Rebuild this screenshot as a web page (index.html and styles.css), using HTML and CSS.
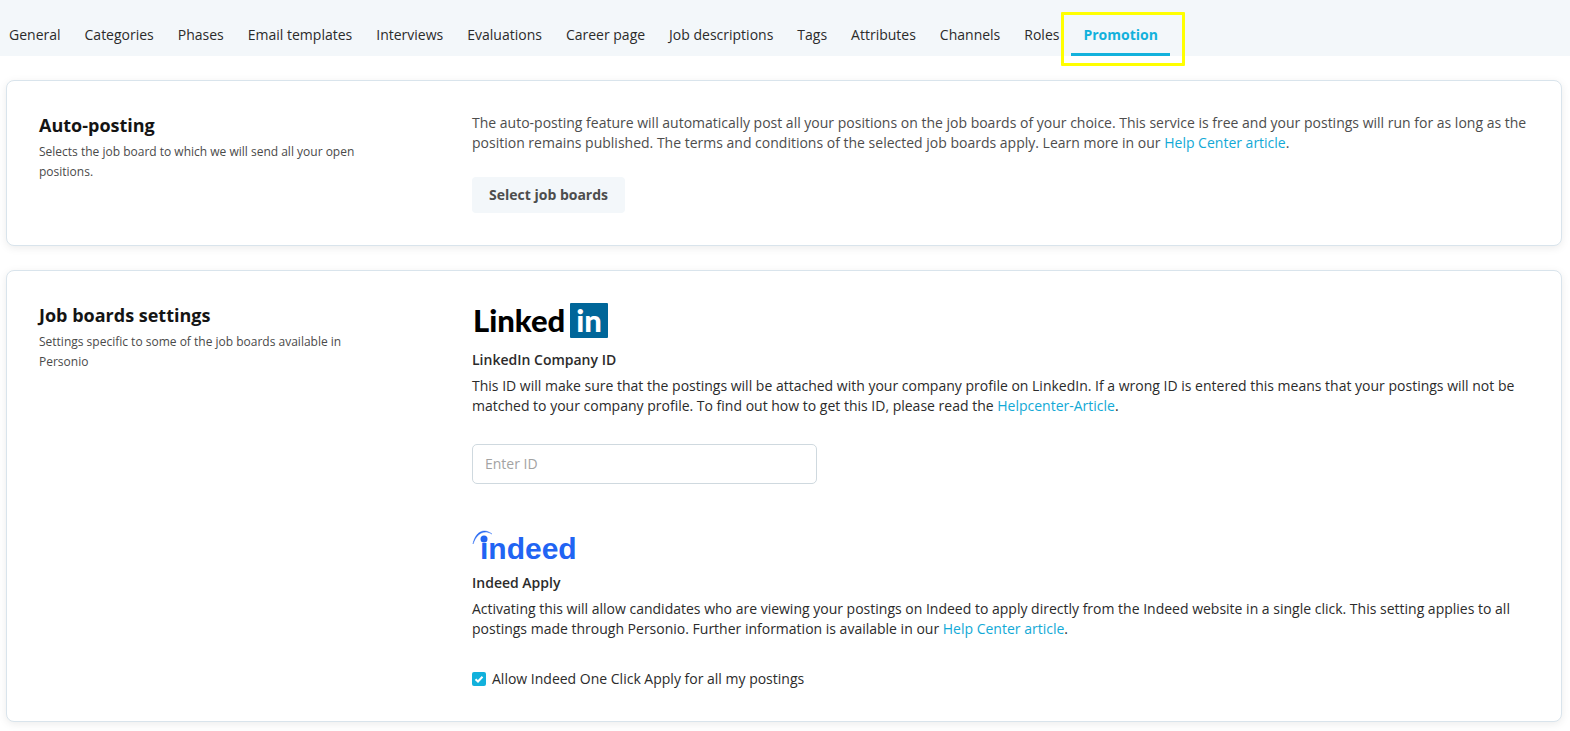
FILE: index.html
```
<!DOCTYPE html>
<html lang="en">
<head>
<meta charset="utf-8">
<title>Promotion</title>
<link rel="stylesheet" href="styles.css">
</head>
<body>
<nav class="tabs" aria-label="Recruiting settings">
  <a class="tab" href="#general">General</a>
  <a class="tab" href="#categories">Categories</a>
  <a class="tab" href="#phases">Phases</a>
  <a class="tab" href="#email">Email templates</a>
  <a class="tab" href="#interviews">Interviews</a>
  <a class="tab" href="#evaluations">Evaluations</a>
  <a class="tab" href="#career">Career page</a>
  <a class="tab" href="#jobs">Job descriptions</a>
  <a class="tab" href="#tags">Tags</a>
  <a class="tab" href="#attributes">Attributes</a>
  <a class="tab" href="#channels">Channels</a>
  <a class="tab" href="#roles">Roles</a>
  <a class="tab tab-active" href="#promotion" aria-current="page">Promotion<span class="highlight"></span></a>
</nav>
<main class="cards">
  <section class="card">
    <header class="card-intro">
      <h2 class="card-title">Auto-posting</h2>
      <p class="card-hint">Selects the job board to which we will send all your open positions.</p>
    </header>
    <div class="card-body">
      <p class="text text-muted">The auto-posting feature will automatically post all your positions on the job boards of your choice. This service is free and your postings will run for as long as the position remains published. The terms and conditions of the selected job boards apply. Learn more in our <a class="link" href="#help">Help Center article</a>.</p>
      <button class="button" type="button">Select job boards</button>
    </div>
  </section>
  <section class="card">
    <header class="card-intro">
      <h2 class="card-title">Job boards settings</h2>
      <p class="card-hint">Settings specific to some of the job boards available in Personio</p>
    </header>
    <div class="card-body">
      <div class="board">
        <svg class="logo" width="136" height="36" viewBox="0 0 136 36" role="img" aria-label="LinkedIn">
          <text class="linked" x="1" y="29">Linked</text>
          <rect x="98" y="0" width="38" height="35" rx="1" fill="#006699"/>
          <text class="linked linked-in" x="117" y="29" text-anchor="middle">in</text>
        </svg>
        <label class="board-title" for="company-id">LinkedIn Company ID</label>
        <p class="text">This ID will make sure that the postings will be attached with your company profile on LinkedIn. If a wrong ID is entered this means that your postings will not be matched to your company profile. To find out how to get this ID, please read the <a class="link" href="#linkedin-help">Helpcenter-Article</a>.</p>
        <input class="field" id="company-id" type="text" placeholder="Enter ID">
      </div>
      <div class="board">
        <svg class="logo" width="106" height="31" viewBox="0 0 106 31" role="img" aria-label="Indeed">
          <text class="indeed" x="8" y="28">ındeed</text>
          <circle cx="12" cy="8" r="3.5" fill="#2164f3"/>
          <path d="M1 13C3 2 11-4 20 3C12-1.500 5 2 1 13Z" fill="#2164f3" stroke="#2164f3" stroke-width=".4"/>
        </svg>
        <h3 class="board-title">Indeed Apply</h3>
        <p class="text">Activating this will allow candidates who are viewing your postings on Indeed to apply directly from the Indeed website in a single click. This setting applies to all postings made through Personio. Further information is available in our <a class="link" href="#indeed-help">Help Center article</a>.</p>
        <label class="check"><span class="check-box"><input class="check-input" type="checkbox" checked><svg class="check-mark" width="14" height="14" viewBox="0 0 14 14" aria-hidden="true"><path d="M3.500 7.200L6 9.500L10.500 4.700" fill="none" stroke="#fff" stroke-width="2"/></svg></span>Allow Indeed One Click Apply for all my postings</label>
      </div>
    </div>
  </section>
</main>
</body>
</html>
```
FILE: styles.css
```
* { box-sizing: border-box; }
body {
  margin: 0;
  background: #fff;
  color: #2b2b2b;
  font: 14px/20px "Open Sans", sans-serif;
}
h2, h3, p { margin: 0; }
.tabs {
  display: flex;
  gap: 24px;
  padding: 0 9px;
  background: #f3f7fa;
  white-space: nowrap;
}
.tab {
  position: relative;
  padding: 25px 0 11px;
  color: #2b2b2b;
  text-decoration: none;
}
.tab-active { color: #12b1dc; font-weight: 700; }
.tab-active::after {
  content: "";
  position: absolute;
  inset: auto -12px 0;
  height: 3px;
  background: #12b1dc;
}
.highlight {
  position: absolute;
  inset: 12px -27px -10px -22px;
  border: 3px solid #ff0;
  border-radius: 1px;
}
.cards {
  display: grid;
  gap: 24px;
  padding: 24px 8px 9px 6px;
}
.card {
  display: grid;
  grid-template-columns: 336px 1fr;
  column-gap: 97px;
  padding: 32px;
  border: 1px solid #d9e4ec;
  border-radius: 8px;
  background: #fff;
  box-shadow: 0 2px 8px rgba(0, 0, 0, 0.08);
}
.card-title {
  color: #141414;
  font-size: 18px;
  line-height: 24px;
  font-weight: 700;
}
.card-hint { margin-top: 5px; color: #4a4a4a; font-size: 12px; }
.text-muted { color: #4d4d4d; }
.link { color: #12a9d6; text-decoration: none; }
.button {
  margin-top: 24px;
  height: 36px;
  padding: 0 17px;
  border: 0;
  border-radius: 4px;
  background: #f3f7fa;
  color: #4d4d4d;
  font: inherit;
  font-weight: 700;
}
.board + .board { margin-top: 47px; }
.logo { display: block; overflow: visible; }
.linked { font: 900 31px Lato, sans-serif; fill: #000; }
.linked-in { fill: #fff; }
.indeed { font: 700 30px "Liberation Sans", sans-serif; fill: #2164f3; }
.board-title {
  display: block;
  margin: 11px 0 6px;
  font-size: 14px;
  line-height: 20px;
  font-weight: 600;
}
.field {
  display: block;
  width: 345px;
  max-width: 100%;
  height: 40px;
  margin-top: 28px;
  padding: 0 12px 1px;
  border: 1px solid #cfd9df;
  border-radius: 5px;
  color: inherit;
  font: inherit;
}
.field::placeholder { color: #a3a3a3; }
.check { display: flex; align-items: center; gap: 6px; margin-top: 30px; }
.check-box { display: grid; }
.check-input, .check-mark { grid-area: 1 / 1; }
.check-input {
  appearance: none;
  width: 14px;
  height: 14px;
  margin: 0;
  border-radius: 2px;
  background: #12b1dc;
}
.check-mark { visibility: hidden; pointer-events: none; }
.check-input:checked + .check-mark { visibility: visible; }
```
